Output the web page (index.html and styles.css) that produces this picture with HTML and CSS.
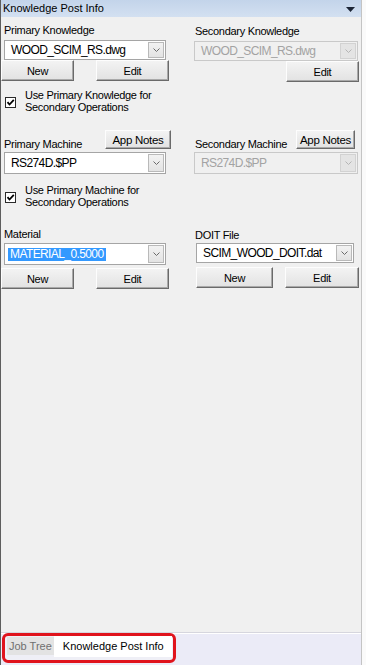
FILE: index.html
```html
<!DOCTYPE html>
<html lang="en">
<head>
    <meta charset="UTF-8">
    <meta name="viewport" content="width=device-width, initial-scale=1.0">
    <title>Knowledge Post Info</title>
    <link rel="stylesheet" href="styles.css">
</head>
<body>
    <div class="window">
        <div class="titlebar">
            <span class="title">Knowledge Post Info</span>
            <svg class="title-arrow" width="9" height="5" viewBox="0 0 9 5"><path d="M0 0 H9 L4.5 5 Z" fill="#1b2435"/></svg>
        </div>

        <div class="panel">
            <!-- knowledge -->
            <section class="row row-knowledge">
                <div class="col col-left">
                    <div class="label">Primary Knowledge</div>
                    <div class="combo combo-primary">
                        <span class="combo-text">WOOD_SCIM_RS.dwg</span>
                        <span class="combo-btn"><svg width="7" height="4" viewBox="0 0 7 4"><path d="M0.5 0.5 L3.5 3.5 L6.5 0.5" fill="none" stroke="#6a6a6a"/></svg></span>
                    </div>
                    <div class="btn-row">
                        <button class="btn">New</button>
                        <button class="btn">Edit</button>
                    </div>
                    <div class="check">
                        <span class="box"><svg width="9" height="9" viewBox="0 0 9 9"><path d="M1.5 4.2 L3.5 6.5 L7.8 1.8" fill="none" stroke="#000" stroke-width="1.8"/></svg></span>
                        <span class="check-text">Use Primary Knowledge for<br>Secondary Operations</span>
                    </div>
                </div>
                <div class="col col-right">
                    <div class="label">Secondary Knowledge</div>
                    <div class="combo combo-secondary disabled">
                        <span class="combo-text">WOOD_SCIM_RS.dwg</span>
                        <span class="combo-btn"><svg width="7" height="4" viewBox="0 0 7 4"><path d="M0.5 0.5 L3.5 3.5 L6.5 0.5" fill="none" stroke="#b4b4b4"/></svg></span>
                    </div>
                    <div class="btn-row btn-row-right">
                        <button class="btn">Edit</button>
                    </div>
                </div>
            </section>

            <!-- machine -->
            <section class="row row-machine">
                <div class="col col-left">
                    <div class="head">
                        <span class="label">Primary Machine</span>
                        <button class="btn btn-notes">App Notes</button>
                    </div>
                    <div class="combo combo-primary tall">
                        <span class="combo-text">RS274D.$PP</span>
                        <span class="combo-btn"><svg width="7" height="4" viewBox="0 0 7 4"><path d="M0.5 0.5 L3.5 3.5 L6.5 0.5" fill="none" stroke="#6a6a6a"/></svg></span>
                    </div>
                    <div class="check">
                        <span class="box"><svg width="9" height="9" viewBox="0 0 9 9"><path d="M1.5 4.2 L3.5 6.5 L7.8 1.8" fill="none" stroke="#000" stroke-width="1.8"/></svg></span>
                        <span class="check-text">Use Primary Machine for<br>Secondary Operations</span>
                    </div>
                </div>
                <div class="col col-right">
                    <div class="head head-right">
                        <span class="label">Secondary Machine</span>
                        <button class="btn btn-notes btn-notes-sm">App Notes</button>
                    </div>
                    <div class="combo combo-secondary tall disabled">
                        <span class="combo-text">RS274D.$PP</span>
                        <span class="combo-btn"><svg width="7" height="4" viewBox="0 0 7 4"><path d="M0.5 0.5 L3.5 3.5 L6.5 0.5" fill="none" stroke="#b4b4b4"/></svg></span>
                    </div>
                </div>
            </section>

            <!-- material / doit -->
            <section class="row row-material">
                <div class="col col-left">
                    <div class="label">Material</div>
                    <div class="combo combo-primary tall">
                        <span class="combo-text selected">MATERIAL_0.5000</span>
                        <span class="combo-btn"><svg width="7" height="4" viewBox="0 0 7 4"><path d="M0.5 0.5 L3.5 3.5 L6.5 0.5" fill="none" stroke="#6a6a6a"/></svg></span>
                    </div>
                    <div class="btn-row">
                        <button class="btn">New</button>
                        <button class="btn">Edit</button>
                    </div>
                </div>
                <div class="col col-right">
                    <div class="label label-doit">DOIT File</div>
                    <div class="combo combo-doit">
                        <span class="combo-text">SCIM_WOOD_DOIT.dat</span>
                        <span class="combo-btn"><svg width="7" height="4" viewBox="0 0 7 4"><path d="M0.5 0.5 L3.5 3.5 L6.5 0.5" fill="none" stroke="#6a6a6a"/></svg></span>
                    </div>
                    <div class="btn-row btn-row-doit">
                        <button class="btn btn-doit-new">New</button>
                        <button class="btn btn-doit-edit">Edit</button>
                    </div>
                </div>
            </section>
        </div>

        <div class="tabbar">
            <div class="tabs">
                <span class="tab">Job Tree</span>
                <span class="tab active">Knowledge Post Info</span>
            </div>
        </div>
    </div>
</body>
</html>
```

FILE: styles.css
```css
* {
    margin: 0;
    padding: 0;
    box-sizing: border-box;
}

body {
    font-family: "Liberation Sans", Arial, sans-serif;
    font-size: 11px;
    letter-spacing: -0.3px;
    background: #fafafa;
    color: #000;
}

.window {
    width: 362px;
    height: 665px;
    display: flex;
    flex-direction: column;
    border-left: 1px solid #5e5e5e;
    border-right: 1px solid #c4c4c4;
    background: #f0f0f0;
}

/* title bar */
.titlebar {
    height: 17px;
    display: flex;
    align-items: center;
    justify-content: space-between;
    padding: 0 6px 0 2px;
    background: linear-gradient(to bottom, #c3d4ea, #d3e0f1);
}

.title {
    font-size: 11px;
    letter-spacing: 0;
    line-height: 17px;
    color: #000;
}

.title-arrow {
    margin-top: 2px;
}

/* panel */
.panel {
    flex: 1;
}

.row {
    display: grid;
    grid-template-columns: 172px 1fr;
    column-gap: 21px;
}

.row-knowledge { height: 108px; }
.row-machine { height: 93px; }
.row-material { height: 80px; }

.col {
    display: flex;
    flex-direction: column;
    align-items: flex-start;
}

.label {
    line-height: 12px;
    white-space: nowrap;
}

.col-left > .label { margin-left: 3px; }
.col-right > .label { margin-left: 1px; }

.row-knowledge .col-left { padding-top: 7px; }
.row-knowledge .col-right { padding-top: 8px; }
.row-material .col-left { padding-top: 10px; }
.row-material .col-right { padding-top: 11px; }

/* combo box */
.combo {
    height: 20px;
    display: flex;
    align-items: center;
    justify-content: space-between;
    background: #fff;
    border: 1px solid #a5a5a5;
    padding: 0 1px 0 6px;
    margin-top: 4px;
}

.combo.tall {
    height: 22px;
    margin-top: 3px;
}

.combo-primary {
    width: 162px;
    margin-left: 3px;
}

.combo-secondary {
    width: 164px;
}

.combo-doit {
    width: 158px;
    margin-left: 2px;
    margin-top: 2px;
}

.combo-text {
    font-size: 12px;
    letter-spacing: -0.6px;
    line-height: 13px;
    white-space: nowrap;
}

.combo-text.selected {
    background: #3399ff;
    color: #fff;
    margin-left: -3px;
    padding: 0 2px;
}

.combo-btn {
    width: 16px;
    height: 16px;
    display: flex;
    align-items: center;
    justify-content: center;
    background: linear-gradient(to bottom, #f2f2f2, #e3e3e3);
    border: 1px solid #b9b9b9;
}

.combo.tall .combo-btn {
    height: 18px;
}

.combo.disabled {
    background: #f0f0f0;
    border-color: #c9c9c9;
    color: #a3a3a3;
}

.combo.disabled .combo-btn {
    background: #e4e4e4;
    border-color: #d2d2d2;
}

/* buttons */
.btn-row {
    display: flex;
    gap: 22px;
}

.row-material .col-left .btn-row { margin-top: 3px; }

.btn {
    width: 73px;
    height: 21px;
    font-family: inherit;
    font-size: 11px;
    letter-spacing: -0.3px;
    color: #000;
    background: linear-gradient(to bottom, #f3f3f3, #e2e2e2);
    border: 1px solid;
    border-color: #fdfdfd #6a6a6a #6a6a6a #fdfdfd;
    box-shadow: inset -1px -1px 0 #a9a9a9;
}

.btn-row-right {
    margin-left: 92px;
}

.btn-row-doit {
    margin-top: 4px;
    margin-left: 2px;
    gap: 12px;
}

.btn-doit-new { width: 77px; }
.btn-doit-edit { width: 74px; }

/* head rows with App Notes */
.head {
    width: 100%;
    height: 19px;
    margin-top: 5px;
    display: flex;
    align-items: flex-end;
    justify-content: space-between;
    padding: 0 2px 0 3px;
}

.head .label {
    margin-bottom: -1px;
}

.head-right {
    padding: 0 6px 0 1px;
}

.btn-notes {
    width: 66px;
    height: 19px;
    font-size: 11.5px;
}

.btn-notes-sm {
    width: 59px;
}

/* checkboxes */
.check {
    display: flex;
    align-items: flex-start;
    margin-left: 4px;
    gap: 9px;
    margin-top: 9px;
}

.row-machine .check {
    margin-top: 11px;
}

.box {
    width: 11px;
    height: 11px;
    margin-top: 7px;
    display: flex;
    align-items: center;
    justify-content: center;
    background: #fff;
    border: 1px solid #2a2a2a;
}

.check-text {
    line-height: 11.5px;
}

/* bottom tabs */
.tabbar {
    height: 33px;
    background: #ebebf7;
    border-top: 1px solid #d6d6de;
    box-shadow: inset 0 1px 0 #fff;
}

.tabs {
    width: 174px;
    height: 30px;
    margin-left: 1px;
    display: flex;
    align-items: flex-start;
    padding: 1px 0 0 2px;
    border: 3px solid #e0131c;
    border-radius: 6px;
    background: #efeff6;
}

.tab {
    font-size: 11px;
    letter-spacing: 0;
    line-height: 18px;
    height: 18px;
    padding: 0 2px;
    color: #6f6f6f;
    background: #e3e3e3;
    white-space: nowrap;
}

.tab.active {
    height: 21px;
    line-height: 20px;
    margin-top: -1px;
    padding: 0 8px 0 9px;
    color: #000;
    background: #fff;
}
```
